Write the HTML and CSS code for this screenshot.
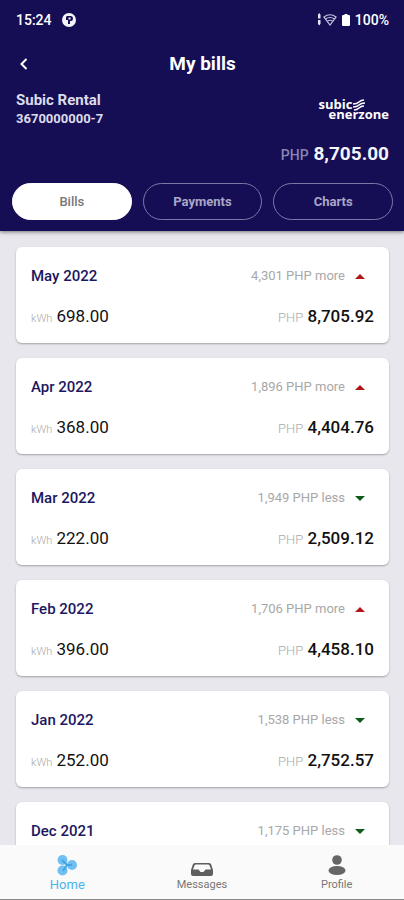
FILE: index.html
```html
<!DOCTYPE html>
<html lang="en">
<head>
    <meta charset="UTF-8">
    <meta name="viewport" content="width=device-width, initial-scale=1.0">
    <title>My bills</title>
    <link rel="stylesheet" href="styles.css">
</head>
<body>
    <header class="header">
        <!-- Status bar -->
        <div class="status-bar">
            <span>15:24</span>
            <svg class="status-app" width="14" height="14" viewBox="0 0 14 14">
                <circle cx="7" cy="7" r="7" fill="#f4f4fb"/>
                <path d="M5 3h4q2 0 2 2.500T9 8H8v3H6V7H4V4z" fill="#150e55"/>
                <path d="M6.500 4.500h2v2h-2z" fill="#f4f4fb"/>
            </svg>
            <div class="status-right">
                <svg width="20" height="14" viewBox="0 0 20 14">
                    <path d="M1 2h2.500v3.500H1zM1 7h2.500v3.500H1zM2.200 0l1.500 2H.7zM2.200 12.500l1.500-2H.7z" fill="#e6e5f2"/>
                    <g fill="none" stroke="#c5c3dc" stroke-width="1.200">
                        <path d="M7 4q6-4.500 12 0l-6 8z"/>
                        <path d="M8.500 6q4.500-3 9 0M10.500 8q2.500-1.500 5 0"/>
                    </g>
                </svg>
                <svg width="8" height="12" viewBox="0 0 8 12">
                    <path d="M2.500 0h3v1H7q1 0 1 1v9q0 1-1 1H1q-1 0-1-1V2q0-1 1-1h1.500z" fill="#fff"/>
                </svg>
                <span>100%</span>
            </div>
        </div>

        <div class="title-bar">
            <button class="back" aria-label="Back">
                <svg width="8" height="12" viewBox="0 0 8 12">
                    <path d="M6.500 1L1.500 6l5 5" fill="none" stroke="#fff" stroke-width="2"/>
                </svg>
            </button>
            <h1>My bills</h1>
        </div>

        <!-- Account -->
        <div class="account">
            <div>
                <p class="account-name">Subic Rental</p>
                <p class="account-number">3670000000-7</p>
            </div>
            <div class="logo">
                <div class="logo-top">
                    <span>subic</span>
                    <svg width="14" height="12" viewBox="0 0 14 12">
                        <path d="M1 5q4 0 6-2t5-2M1 8q4 0 6-2t6-2M2 11q3 0 5-2t5-2" fill="none" stroke="#fff" stroke-width="1.500"/>
                    </svg>
                </div>
                <span class="logo-bottom">enerzone</span>
            </div>
        </div>
        <p class="balance"><span>PHP</span> 8,705.00</p>

        <div class="tabs">
            <button class="tab active">Bills</button>
            <button class="tab">Payments</button>
            <button class="tab">Charts</button>
        </div>
    </header>

    <!-- Bills list -->
    <main class="bills">
        <article class="bill">
            <div class="bill-row">
                <h2>May 2022</h2>
                <p class="change more">4,301 PHP more</p>
            </div>
            <div class="bill-row">
                <p class="usage"><span>kWh</span> 698.00</p>
                <p class="amount"><span>PHP</span> 8,705.92</p>
            </div>
        </article>
        <article class="bill">
            <div class="bill-row">
                <h2>Apr 2022</h2>
                <p class="change more">1,896 PHP more</p>
            </div>
            <div class="bill-row">
                <p class="usage"><span>kWh</span> 368.00</p>
                <p class="amount"><span>PHP</span> 4,404.76</p>
            </div>
        </article>
        <article class="bill">
            <div class="bill-row">
                <h2>Mar 2022</h2>
                <p class="change less">1,949 PHP less</p>
            </div>
            <div class="bill-row">
                <p class="usage"><span>kWh</span> 222.00</p>
                <p class="amount"><span>PHP</span> 2,509.12</p>
            </div>
        </article>
        <article class="bill">
            <div class="bill-row">
                <h2>Feb 2022</h2>
                <p class="change more">1,706 PHP more</p>
            </div>
            <div class="bill-row">
                <p class="usage"><span>kWh</span> 396.00</p>
                <p class="amount"><span>PHP</span> 4,458.10</p>
            </div>
        </article>
        <article class="bill">
            <div class="bill-row">
                <h2>Jan 2022</h2>
                <p class="change less">1,538 PHP less</p>
            </div>
            <div class="bill-row">
                <p class="usage"><span>kWh</span> 252.00</p>
                <p class="amount"><span>PHP</span> 2,752.57</p>
            </div>
        </article>
        <article class="bill">
            <div class="bill-row">
                <h2>Dec 2021</h2>
                <p class="change less">1,175 PHP less</p>
            </div>
        </article>
    </main>

    <!-- Bottom navigation -->
    <nav class="bottom-nav">
        <a href="#" class="nav-item active">
            <svg width="20" height="22" viewBox="0 0 20 22">
                <g fill="#6fbff2">
                    <circle cx="5.500" cy="6" r="5"/>
                    <circle cx="15" cy="11" r="5"/>
                    <circle cx="5.500" cy="16.500" r="5"/>
                </g>
                <path d="M5 6l5 5-4 6M10 11h5" fill="none" stroke="#42a5e6" stroke-width="2"/>
            </svg>
            <span>Home</span>
        </a>
        <a href="#" class="nav-item">
            <svg width="24" height="22" viewBox="0 0 24 22">
                <path d="M5 9h14q1 0 2 1l2 6v4q0 2-2 2H3q-2 0-2-2v-4l2-6q1-1 2-1z" fill="#5f5f5f"/>
                <path d="M6 10.500h12q1 0 1.500 1l1.500 4h-5.500l-2 2.500h-3l-2-2.500H3l1.500-4q.5-1 1.500-1z" fill="#fafafa"/>
            </svg>
            <span>Messages</span>
        </a>
        <a href="#" class="nav-item">
            <svg width="18" height="22" viewBox="0 0 18 22">
                <circle cx="9" cy="6" r="4.800" fill="#666"/>
                <ellipse cx="9" cy="16.500" rx="8.500" ry="4.500" fill="#666"/>
            </svg>
            <span>Profile</span>
        </a>
    </nav>
</body>
</html>
```
FILE: styles.css
```css
* {
    margin: 0;
    padding: 0;
    box-sizing: border-box;
}

body {
    display: flex;
    flex-direction: column;
    height: 100vh;
    background-color: #e8e7ee;
    color: #111;
    font-family: Roboto, "Liberation Sans", sans-serif;
}

button {
    font-family: inherit;
    cursor: pointer;
}

svg {
    display: block;
}

.header {
    flex: none;
    padding: 10px 11px 11px 12px;
    background-color: #150e55;
    color: #fff;
    box-shadow: 0 1px 4px rgba(0, 0, 0, 0.5);
    z-index: 1;
}

.status-bar {
    display: flex;
    align-items: center;
    gap: 10px;
    padding: 0 4px;
    font-size: 14px;
    font-weight: 500;
    line-height: 20px;
}

.status-right {
    display: flex;
    align-items: center;
    gap: 5px;
    margin-left: auto;
}

.title-bar {
    display: grid;
    grid-template-columns: 24px 1fr 24px;
    align-items: center;
    margin-top: 22px;
}

.title-bar h1 {
    font-size: 19px;
    font-weight: 700;
    line-height: 24px;
    text-align: center;
}

.back {
    display: flex;
    justify-content: center;
    padding: 6px 0;
    border: none;
    background: none;
}

.account {
    display: flex;
    justify-content: space-between;
    align-items: center;
    margin-top: 14px;
    padding: 0 4px;
    color: #dddcea;
    font-weight: 700;
}

.account-name {
    font-size: 15px;
    line-height: 20px;
}

.account-number {
    font-size: 13px;
    line-height: 18px;
}

.logo {
    display: flex;
    flex-direction: column;
    color: #fff;
    font-family: "Open Sans", sans-serif;
    font-size: 13px;
    line-height: 10px;
}

.logo-top {
    display: flex;
    height: 10px;
}

.logo-bottom {
    padding-left: 10px;
}

.balance {
    margin-top: 14px;
    padding: 0 4px;
    color: #f4f4fb;
    font-size: 19px;
    font-weight: 700;
    line-height: 24px;
    text-align: right;
}

.balance span {
    color: #8985b0;
    font-size: 14px;
    font-weight: 500;
}

.tabs {
    display: grid;
    grid-template-columns: repeat(3, 1fr);
    gap: 11px;
    margin-top: 16px;
}

.tab {
    height: 37px;
    border: 1px solid #7c78a8;
    border-radius: 19px;
    background: none;
    color: #aaa7c5;
    font-size: 13px;
    font-weight: 700;
}

.tab.active {
    border-color: #fff;
    background-color: #fff;
    color: #777;
    font-weight: 500;
}

.bills {
    flex: 1;
    min-height: 0;
    overflow: hidden;
    padding: 16px 15px 0 16px;
}

.bill {
    margin-bottom: 15px;
    padding: 19px 15px 17px;
    border-radius: 6px;
    background-color: #fff;
    box-shadow: 0 1px 2px rgba(0, 0, 0, 0.3);
}

.bill-row {
    display: flex;
    justify-content: space-between;
    height: 20px;
    line-height: 20px;
}

.bill-row + .bill-row {
    margin-top: 20px;
}

.bill h2 {
    color: #1c1760;
    font-size: 15px;
    font-weight: 500;
}

.change {
    display: flex;
    align-items: center;
    gap: 10px;
    padding-right: 9px;
    color: #a8a8a8;
    font-size: 13px;
}

.change::after {
    content: "";
    border: 5px solid transparent;
}

.change.more::after {
    border-top: none;
    border-bottom-color: #b01818;
}

.change.less::after {
    border-bottom: none;
    border-top-color: #0f5a18;
}

.usage,
.amount {
    font-size: 17px;
}

.usage span,
.amount span {
    color: #aaa;
    font-weight: 300;
}

.usage span {
    font-size: 11px;
}

.amount {
    font-weight: 500;
}

.amount span {
    font-size: 13px;
}

.bottom-nav {
    flex: none;
    display: grid;
    grid-template-columns: repeat(3, 1fr);
    padding: 9px 0 6px;
    border-bottom: 1px solid #888;
    background-color: #fafafa;
}

.nav-item {
    display: flex;
    flex-direction: column;
    align-items: center;
    color: #777;
    font-size: 11px;
    line-height: 17px;
    text-decoration: none;
}

.nav-item.active {
    color: #48b5ee;
    font-size: 13px;
}
```
